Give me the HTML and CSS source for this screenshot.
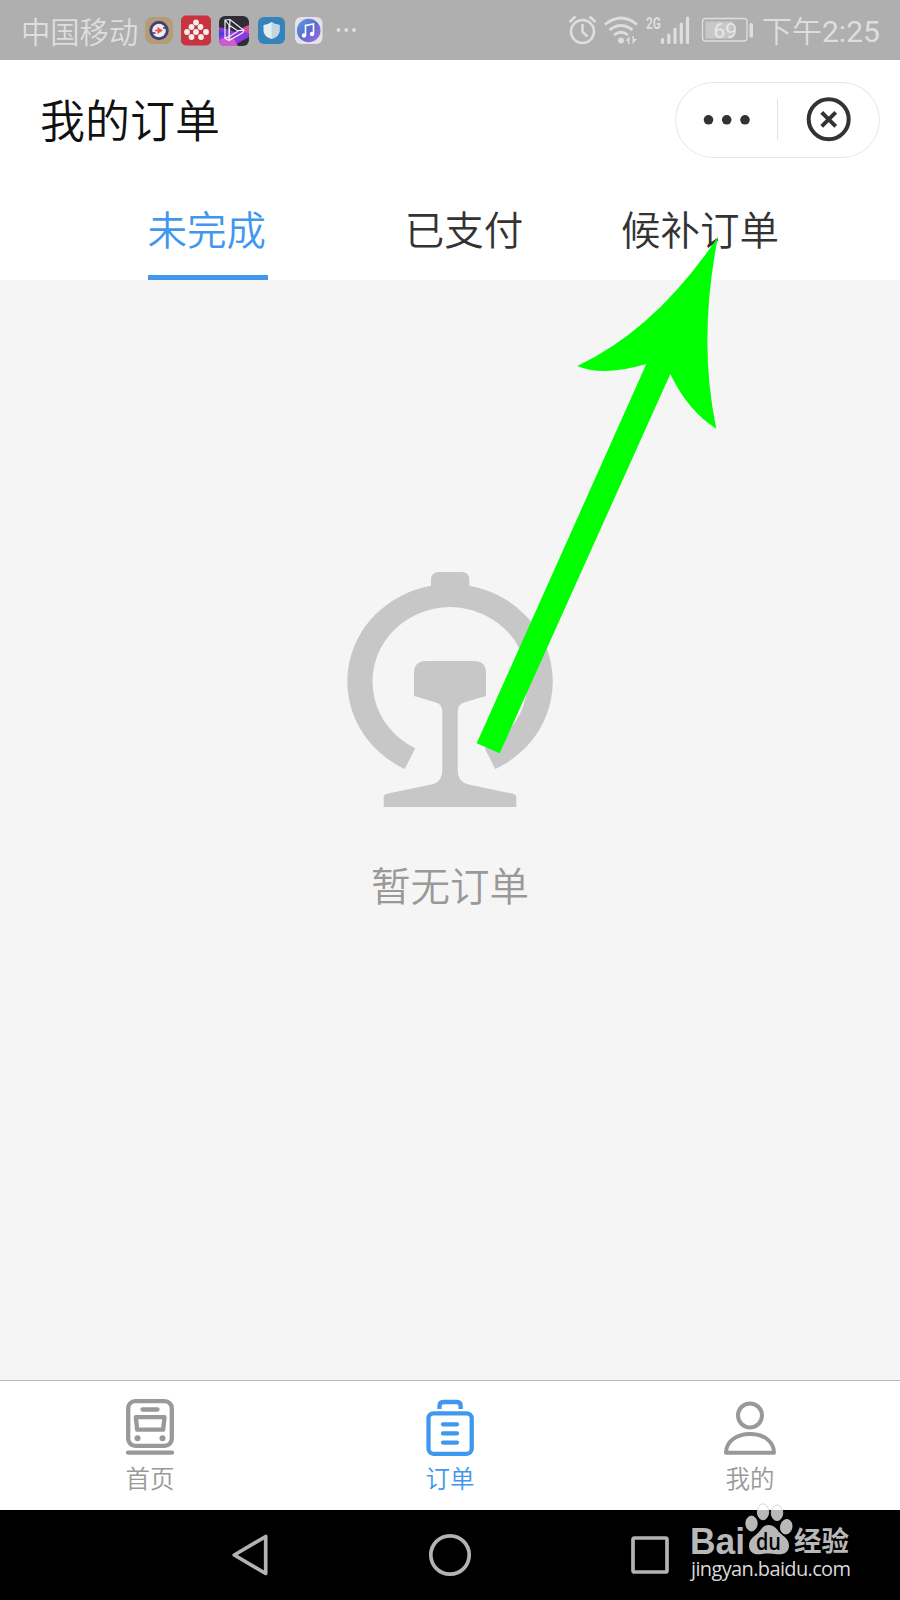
FILE: index.html
```html
<!DOCTYPE html>
<html lang="zh-CN">
<head>
    <meta charset="utf-8">
    <title>我的订单</title>
    <link rel="stylesheet" href="styles.css">
</head>
<body>
<div class="statusbar">
    <span class="carrier">中国移动</span>
    <svg class="apps" width="214" height="32" viewBox="144 14 214 32">
        <defs>
            <linearGradient id="music" x1="0" y1="0" x2="1" y2="1">
                <stop offset="0" stop-color="#5aa0e6"/>
                <stop offset=".5" stop-color="#5a6bd0"/>
                <stop offset="1" stop-color="#a76be0"/>
            </linearGradient>
            <clipPath id="video"><rect x="219" y="16" width="30" height="30" rx="6"/></clipPath>
        </defs>
        <rect x="145" y="17" width="28" height="27" rx="8" fill="#b49c75"/>
        <circle cx="159" cy="30.5" r="9.7" fill="#443f78"/>
        <circle cx="159" cy="30.5" r="6.8" fill="#eee"/>
        <path d="M151.500 33h4M163 28h4" stroke="#443f78" stroke-width="1.3"/>
        <path d="M157.500 27l5.500 3.500-5.500 3.500zM155 29.800h3v1.500h-3z" fill="#e0564f"/>
        <rect x="181" y="15.500" width="30" height="30" rx="5" fill="#c9323f"/>
        <g fill="#f3eded">
            <circle cx="196" cy="22.500" r="2.900"/>
            <circle cx="191.500" cy="27" r="2.900"/><circle cx="200.500" cy="27" r="2.900"/>
            <circle cx="187" cy="32" r="2.900"/><circle cx="196" cy="32" r="2.900"/><circle cx="206" cy="32" r="2.900"/>
            <circle cx="191.500" cy="37" r="2.900"/><circle cx="201" cy="37" r="2.900"/>
        </g>
        <g clip-path="url(#video)">
            <rect x="219" y="15" width="30" height="31" fill="#2f2c36"/>
            <path d="M219 27l8 2 8 3 13-7 1 12-9 5-7 4h-14z" fill="#8a3be0"/>
            <path d="M219 40l9-4 6 3 4 7h-19z" fill="#d15ad0"/>
            <path d="M241 29l8-4v9z" fill="#e04a9e"/>
            <path d="M219 30l8 4-8 3z" fill="#4a3fe0"/>
        </g>
        <path d="M225 20l5-.5 14 11-1 2-14 8-4-2zM230 19.500l-1 21M229 25l9 6-9 6zM225 20l4 5M244 30.500h-6M225 38.500l4-2" fill="none" stroke="#eee" stroke-width="1.200"/>
        <rect x="258" y="17" width="27" height="27" rx="6" fill="#3583bb"/>
        <path d="M271.500 22q4 3 8 3v6q0 5-8 8-8-3-8-8v-6q4 0 8-3z" fill="#e4edf2"/>
        <path d="M271.500 22q4 3 8 3v6q0 5-8 8z" fill="#c3d5df"/>
        <rect x="295" y="17" width="27.500" height="27" rx="6" fill="#e4e2e8"/>
        <circle cx="308.700" cy="30.500" r="11.800" fill="url(#music)"/>
        <path d="M305.500 35.500v-10l8-1.500v10" fill="none" stroke="#fff" stroke-width="1.600"/>
        <circle cx="304" cy="35.500" r="2.200" fill="#fff"/><circle cx="312" cy="34" r="2.200" fill="#fff"/>
        <g fill="#dedede"><circle cx="338.500" cy="30" r="2"/><circle cx="346.300" cy="30" r="2"/><circle cx="354" cy="30" r="2"/></g>
    </svg>
    <svg class="signals" width="188" height="32" viewBox="568 14 188 32">
        <g fill="none" stroke="#dedede" stroke-width="2.500">
            <circle cx="582.500" cy="31.500" r="11.500"/>
            <path d="M569.500 22l6-5.500M595.500 22l-6-5.500M582.500 24v8l5 4.500"/>
            <path d="M605 24.500q16-13 32 0M609.500 30q11.500-9 23 0M614 35q7-5.500 14 0" stroke-width="2.800"/>
        </g>
        <circle cx="621" cy="40.500" r="3" fill="#dedede"/>
        <path d="M625.500 41l4-5v8h-1.500v-3zM637 39l-4.500 5v-8h1.500v3z" fill="#dedede"/>
        <text class="net" x="646" y="28.500" textLength="15" lengthAdjust="spacingAndGlyphs">2G</text>
        <path d="M662.500 39.500v3M668.800 35v7.500M675 29v13.500M681.300 24v18.500M687.500 18v24.500" stroke="#dedede" stroke-width="3.200" stroke-linecap="round"/>
        <rect x="702.500" y="18.500" width="44.500" height="22.500" rx="3" fill="none" stroke="#dedede" stroke-width="1.300"/>
        <rect x="705.500" y="21.500" width="27" height="17" fill="#c8c8c8"/>
        <rect x="749.500" y="23" width="3.500" height="14.500" rx="1.500" fill="#dedede"/>
        <text class="level" x="713.500" y="37.500" textLength="23.500" lengthAdjust="spacingAndGlyphs">69</text>
    </svg>
    <span class="clock">下午<span class="digits">2:25</span></span>
</div>

<header>
    <h1>我的订单</h1>
    <div class="capsule">
        <svg width="205" height="76" viewBox="675 82 205 76">
            <g fill="#333"><circle cx="708.500" cy="119.800" r="4.800"/><circle cx="726.700" cy="119.800" r="4.800"/><circle cx="745" cy="119.800" r="4.800"/></g>
            <path d="M777.500 99v41" stroke="#e2e2e2"/>
            <circle cx="828.700" cy="119.300" r="20" fill="none" stroke="#333" stroke-width="4"/>
            <path d="M821.700 112.300l14 14M835.700 112.300l-14 14" stroke="#333" stroke-width="4"/>
        </svg>
    </div>
</header>

<nav class="tabs">
    <a class="active">未完成</a>
    <a>已支付</a>
    <a>候补订单</a>
</nav>

<main>
    <svg width="206" height="236" viewBox="347 572 206 236" fill="#c7c7c7">
        <path d="M404.700 769A102.700 97.500 0 0 1 431 585.700V580q0-8 8-8h22.300q8 0 8 8v5.700A102.700 97.500 0 0 1 495.300 769L484.700 748.200A77.500 74.500 0 1 0 415.300 748.200Z"/>
        <path d="M426 661h48q12 0 12 12v23l-22 6.500q-6.300 2-6.300 9V770q0 12 11 14.500l43.300 9.100q4.300 1 4.300 3.400v10H383.700v-10q0-2.400 4.300-3.400l43.300-9.100q11-2.500 11-14.500V711.500q0-7-6.300-9l-22-6.500v-23q0-12 12-12z"/>
    </svg>
    <p>暂无订单</p>
</main>

<nav class="tabbar">
    <a>
        <svg width="60" height="58" viewBox="120 1398 60 58" fill="none" stroke="#999" stroke-width="4.300">
            <rect x="128.200" y="1401.200" width="43.600" height="44.600" rx="7"/>
            <path d="M142.500 1409.500h15M128 1452.700h44" stroke-linecap="round"/>
            <path d="M135.800 1417.200h28.700l-1.400 12.500h-25.900z" stroke-linejoin="round"/>
            <circle cx="137.500" cy="1438.300" r="3" fill="#999" stroke="none"/>
            <circle cx="162.500" cy="1438.300" r="3" fill="#999" stroke="none"/>
        </svg>
        <span>首页</span>
    </a>
    <a class="active">
        <svg width="60" height="58" viewBox="420 1398 60 58" fill="none" stroke="#3f98ee" stroke-width="4.300">
            <rect x="428.500" y="1413.300" width="43.200" height="40.500" rx="5"/>
            <path d="M439.500 1409v-3q0-4 4-4h13.200q4 0 4 4v3"/>
            <path d="M443 1424.300h14M443 1433.400h14M443 1442.600h14" stroke-linecap="round"/>
        </svg>
        <span>订单</span>
    </a>
    <a>
        <svg width="60" height="58" viewBox="720 1398 60 58" fill="none" stroke="#999" stroke-width="4">
            <circle cx="750" cy="1415.500" r="12"/>
            <path d="M726 1452.700c0-11 10-18.700 24-18.700s24 7.700 24 18.700z" stroke-linejoin="round"/>
        </svg>
        <span>我的</span>
    </a>
</nav>

<footer>
    <svg width="44" height="44" viewBox="228 1533 44 44"><path d="M265.700 1536.500v37L234.300 1555z"/></svg>
    <svg width="44" height="44" viewBox="428 1533 44 44"><circle cx="450" cy="1555" r="19.200"/></svg>
    <svg width="44" height="44" viewBox="628 1533 44 44"><rect x="633" y="1538" width="34" height="34" rx="1.500"/></svg>
</footer>

<svg class="arrow" width="243" height="518" viewBox="476 236 243 518">
    <path d="M718 236.700Q656 329 577.300 366Q602 377 646.300 364L476.700 743.300L499.700 753.300L670.300 374Q688 411 716.300 428.700Q697.600 340 718 236.700Z"/>
</svg>

<svg class="watermark" width="170" height="84" viewBox="686 1500 170 84">
    <g fill="#fff" fill-opacity=".72" stroke="#ccc" stroke-width=".8">
        <ellipse cx="751.500" cy="1523.500" rx="5.700" ry="7.500"/>
        <ellipse cx="763" cy="1511.800" rx="5.700" ry="8"/>
        <ellipse cx="777" cy="1512.800" rx="5.800" ry="7.800"/>
        <ellipse cx="786.200" cy="1526.700" rx="5.700" ry="7.300" transform="rotate(12 786 1527)"/>
    </g>
    <path d="M768.500 1525c6 0 8 4 11 7.500 4.500 4 9.500 7 9.500 13 0 7-5.500 9.500-12 8.700-6-1-11-1-17 0-6.500.8-11-2.200-11-8.700 0-6 5-9 9.500-13 3.500-3.500 4.500-7.500 10-7.500z" fill="#b8b8b8"/>
    <text class="bai" x="690" y="1554" textLength="55" lengthAdjust="spacingAndGlyphs">Bai</text>
    <text class="du" x="756" y="1549.500" textLength="25" lengthAdjust="spacingAndGlyphs">du</text>
    <text class="jy" x="794" y="1551" textLength="55">经验</text>
    <text class="site" x="691" y="1575.500" textLength="160">jingyan.baidu.com</text>
</svg>
</body>
</html>
```
FILE: styles.css
```css
body {
    font-family: "Noto Sans CJK SC", sans-serif;
    font-weight: 350;
    margin: 0;
    padding: 0;
    width: 900px;
    height: 1600px;
    display: flex;
    flex-direction: column;
    position: relative;
    overflow: hidden;
    background-color: white;
}
svg {
    display: block;
    flex: none;
}
.statusbar {
    box-sizing: border-box;
    height: 60px;
    padding: 0 20px 0 21px;
    display: flex;
    align-items: center;
    background-color: #afafaf;
    color: #dedede;
    font-size: 29.3px;
    line-height: 60px;
    white-space: nowrap;
}
.carrier {
    width: 123px;
}
.signals {
    margin-left: auto;
}
.clock {
    width: 118px;
    margin-left: 6px;
    font-size: 30px;
}
.digits {
    font-family: Roboto, sans-serif;
    font-size: 30px;
    font-weight: 400;
}
.net {
    font: bold 17px Roboto, sans-serif;
    fill: #dedede;
}
.level {
    font: 21px Roboto, sans-serif;
    fill: #e8e8e8;
}
header {
    height: 120px;
    box-sizing: border-box;
    padding: 0 20px 0 40px;
    display: flex;
    align-items: center;
    justify-content: space-between;
}
h1 {
    margin: 0;
    padding-bottom: 2px;
    font-size: 45px;
    font-weight: 350;
    line-height: 60px;
    color: #111;
}
.capsule {
    box-sizing: border-box;
    width: 205px;
    height: 76px;
    border-radius: 38px;
    box-shadow: inset 0 0 0 1px #e6e6e6;
}
.tabs {
    height: 100px;
    box-sizing: border-box;
    padding-left: 79px;
    display: grid;
    grid-template-columns: 257px 256px 216px;
    justify-items: center;
    font-size: 39.5px;
    color: #333;
}
.tabs a {
    box-sizing: border-box;
    height: 100px;
    line-height: 95px;
    border-bottom: 5px solid transparent;
}
.tabs .active {
    padding-right: 1.5px;
    color: #3f98ee;
    border-color: #3f98ee;
}
main {
    flex: 1;
    background-color: #f5f5f5;
    display: flex;
    flex-direction: column;
    align-items: center;
    padding-top: 292px;
}
main p {
    margin: 46px 0 0;
    font-size: 39.5px;
    line-height: 60px;
    color: #999;
}
.tabbar {
    box-sizing: border-box;
    height: 130px;
    border-top: 1px solid #b8b8b8;
    display: grid;
    grid-template-columns: repeat(3, 1fr);
    font-size: 24.5px;
    color: #999;
}
.tabbar a {
    display: flex;
    flex-direction: column;
    align-items: center;
    padding-top: 17px;
}
.tabbar span {
    line-height: 30px;
    margin-top: 7px;
}
.tabbar .active {
    color: #3f98ee;
}
footer {
    box-sizing: border-box;
    height: 90px;
    padding: 0 150px;
    background-color: black;
    display: grid;
    grid-template-columns: repeat(3, 1fr);
    justify-items: center;
    align-items: center;
}
footer svg {
    fill: none;
    stroke: #b3b3b3;
    stroke-width: 3.7px;
    stroke-linejoin: round;
}
/* lies over the tabs and the empty state */
.arrow {
    position: absolute;
    left: 476px;
    top: 236px;
    fill: #00ff00;
}
.watermark {
    position: absolute;
    left: 686px;
    top: 1500px;
}
.bai {
    font: bold 37px "Liberation Sans", sans-serif;
    fill: #b8b8b8;
}
.du {
    font: 600 23px "Open Sans", sans-serif;
    fill: black;
}
.jy {
    font: bold 27.5px "Noto Sans CJK SC", sans-serif;
    fill: #b8b8b8;
}
.site {
    font: 20px "Open Sans", sans-serif;
    fill: #d8d8d8;
}
```
